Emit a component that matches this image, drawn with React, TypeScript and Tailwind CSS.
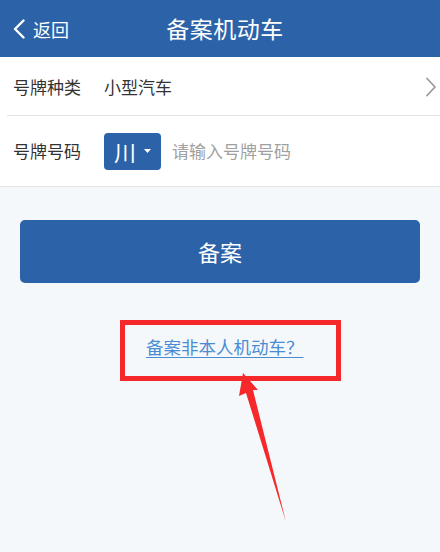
import React from "react";

const cjk = { fontFamily: '"Noto Sans CJK SC", "Noto Sans", sans-serif' };

export default function App() {
  return (
    <div className="relative w-[440px] h-[552px] overflow-hidden bg-[#f5f8fa]" style={cjk}>
      {/* Header */}
      <div className="relative flex h-[57px] items-center bg-[#2c63a8] text-white">
        <div className="flex items-center pl-[12px]">
          <svg width="14" height="20" viewBox="0 0 14 20" fill="none">
            <path d="M11.5 1.5 L3 10 L11.5 18.5" stroke="white" strokeWidth="2.4" strokeLinecap="round" strokeLinejoin="round" />
          </svg>
          <span className="ml-[7px] text-[18px] leading-none">返回</span>
        </div>
        <div className="absolute inset-x-0 top-0 flex h-[57px] items-center justify-center pl-[10px] pointer-events-none">
          <span className="text-[23px] font-normal tracking-[0.5px] leading-none">备案机动车</span>
        </div>
      </div>

      {/* Form */}
      <div className="bg-white">
        <div className="relative flex h-[59px] items-center pl-[13px] pr-[3px]">
          <span className="w-[91px] text-[17px] text-[#333]">号牌种类</span>
          <span className="flex-1 text-[17px] text-[#333]">小型汽车</span>
          <svg width="12" height="20" viewBox="0 0 12 20" fill="none">
            <path d="M2 1.5 L10 10 L2 18.5" stroke="#9a9a9a" strokeWidth="1.8" strokeLinecap="round" strokeLinejoin="round" />
          </svg>
          <div className="absolute bottom-0 left-[7px] right-0 h-px bg-[#e3e3e3]" />
        </div>
        <div className="flex h-[71px] items-center border-b border-[#e3e3e3] pl-[13px]">
          <span className="w-[91px] text-[17px] text-[#333]">号牌号码</span>
          <div className="flex h-[37px] w-[57px] items-center rounded-[4px] bg-[#2c63a8] pl-[10px] text-white">
            <span className="text-[22px] leading-none">川</span>
            <svg className="ml-[8px]" width="7" height="5" viewBox="0 0 7 5">
              <path d="M0 0 L7 0 L3.5 4 Z" fill="white" />
            </svg>
          </div>
          <span className="ml-[11px] text-[17px] text-[#a0a0a0]">请输入号牌号码</span>
        </div>
      </div>

      {/* Button */}
      <div className="px-[20px] pt-[33px]">
        <button className="flex h-[63px] w-full items-center justify-center rounded-[5px] bg-[#2c63a8] text-[22px] text-white">
          备案
        </button>
      </div>

      {/* Link with annotation box */}
      <div className="pt-[37px] pl-[120px]">
        <div className="h-[61px] w-[221px] border-[5px] border-[#f5292c] pl-[21px] pt-[9px]">
          <a className="text-[17.5px] text-[#4a8cd3] underline underline-offset-[3px] decoration-[1px]">
            备案非本人机动车？
          </a>
        </div>
      </div>

      {/* Annotation arrow */}
      <svg className="absolute left-0 top-0 pointer-events-none" width="440" height="552" viewBox="0 0 440 552">
        <polygon points="243,373 258,390 253,390 286,522 246,393 239,396" fill="#f5292c" />
      </svg>
    </div>
  );
}
